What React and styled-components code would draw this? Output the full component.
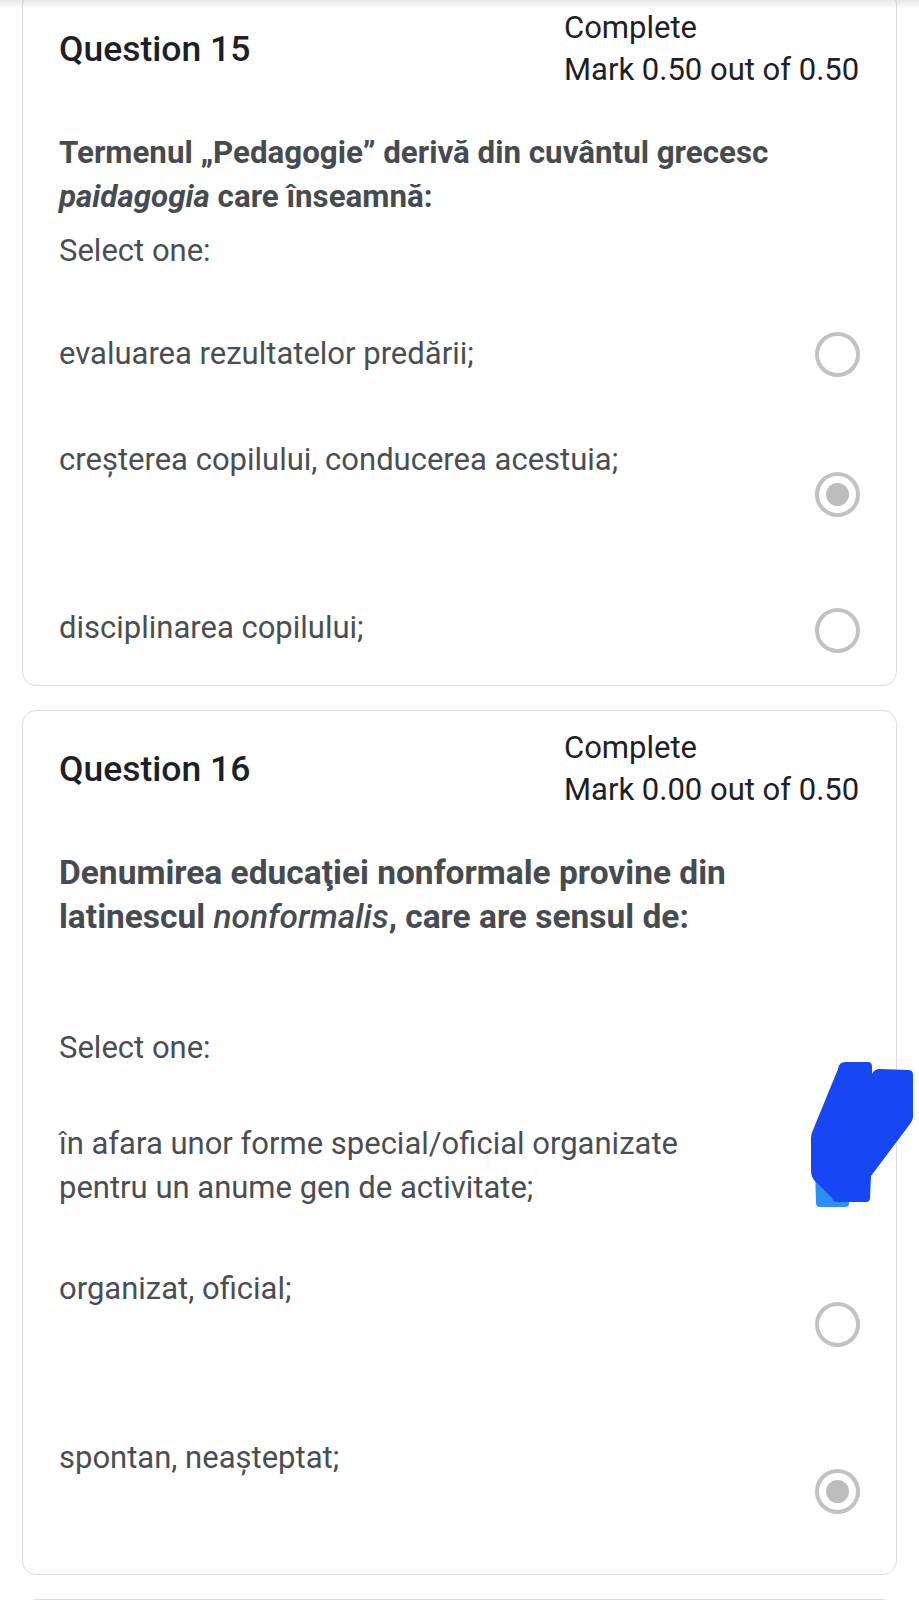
import React from 'react'
import styled, { createGlobalStyle } from 'styled-components'

const GlobalStyle = createGlobalStyle`
    body {
        margin: 0;
        background: #ffffff;
        font-family: Roboto, "Liberation Sans", sans-serif;
        overflow: hidden;
    }
`;

const Page = styled.div`
    position: relative;
    padding: 0 22px;
    display: flex;
    flex-direction: column;
    gap: 24px;
`;

const TopShade = styled.div`
    position: fixed;
    top: 0;
    left: 0;
    right: 0;
    height: 9px;
    background: linear-gradient(to bottom, rgba(0,0,0,0.09), rgba(0,0,0,0));
    z-index: 5;
`;

const Card = styled.div`
    position: relative;
    border: 1.5px solid #dedede;
    border-radius: 14px;
    padding: 16px 36px 0 36px;
    margin-top: ${props => props.$offset || 0}px;
    min-height: ${props => props.$stub ? '120px' : 'auto'};
`;

const Header = styled.div`
    display: flex;
    justify-content: space-between;
    align-items: center;
    margin-bottom: 40px;
`;

const Title = styled.h3`
    margin: 0;
    font-size: 35.5px;
    font-weight: 500;
    color: #1d2125;
`;

const Meta = styled.div`
    font-size: 31px;
    line-height: 42px;
    color: #1d2125;
    width: 296px;
`;

const QText = styled.div`
    font-size: ${props => props.$size}px;
    line-height: 44px;
    font-weight: 700;
    color: #464b50;
    max-width: 740px;
    margin-bottom: ${props => props.$after}px;

    i {
        font-weight: ${props => props.$emWeight};
    }
`;

const Prompt = styled.div`
    font-size: 31px;
    line-height: 44px;
    color: #4a4e53;
`;

const AnswerList = styled.div`
    margin-top: ${props => props.$top}px;
    display: flex;
    flex-direction: column;
`;

const AnswerRow = styled.div`
    display: flex;
    justify-content: space-between;
    align-items: flex-start;
    gap: 16px;
    min-height: ${props => props.$h}px;
`;

const AnswerText = styled.div`
    font-size: 31px;
    line-height: 44px;
    color: #4a4e53;
    max-width: 680px;
`;

const Radio = styled.div`
    flex: 0 0 auto;
    box-sizing: border-box;
    width: 45px;
    height: 45px;
    margin-top: ${props => props.$mt}px;
    border: 4px solid #c2c2c2;
    border-radius: 50%;
    display: flex;
    align-items: center;
    justify-content: center;

    &::after {
        content: '';
        display: ${props => props.$checked ? 'block' : 'none'};
        width: 23px;
        height: 23px;
        border-radius: 50%;
        background: #bdbdbd;
    }
`;

const Scribble = styled.svg`
    position: absolute;
    left: 785px;
    top: 347px;
    z-index: 3;
`;

const questions = [
    {
        number: 15,
        mark: '0.50',
        size: 31.3,
        emWeight: 700,
        after: 10,
        listTop: 59,
        text: (
            <>Termenul „Pedagogie” derivă din cuvântul grecesc <i>paidagogia</i> care înseamnă:</>
        ),
        answers: [
            { label: 'evaluarea rezultatelor predării;', h: 106, mt: 0 },
            { label: 'creșterea copilului, conducerea acestuia;', h: 168, mt: 34, checked: true },
            { label: 'disciplinarea copilului;', h: 79, mt: 2 },
        ],
    },
    {
        number: 16,
        mark: '0.00',
        size: 33.5,
        emWeight: 500,
        after: 87,
        listTop: 52,
        redacted: true,
        text: (
            <>Denumirea educaţiei nonformale provine din latinescul <i>nonformalis</i>, care are sensul de:</>
        ),
        answers: [
            { label: 'în afara unor forme special/oficial organizate pentru un anume gen de activitate;', h: 145, mt: 12 },
            { label: 'organizat, oficial;', h: 169, mt: 35 },
            { label: 'spontan, neașteptat;', h: 138, mt: 33, checked: true },
        ],
    },
];

const Redaction = () => (
    <Scribble width="110" height="150" viewBox="0 0 110 150">
        <path
            d="M7 110 L41 110 L41 146 Q41 149 37 149 L12 149 Q8 149 8 145 Z"
            fill="#2b8ef2"
        />
        <path
            d="M30 11 Q31 4 37 4 L60 4 Q64 4 64 9 L64 16 Q66 11 72 11 L100 12 Q105 12 105 17 L105 59
               Q105 62 102 66 L63 118 L62 140 Q62 144 58 144 L30 144 Q25 144 24 140 L8 124 Q3 120 3 112
               L3 80 Q3 76 5 72 Z"
            fill="#1746f4"
        />
    </Scribble>
);

const QuestionCard = ({ q, offset }) => (
    <Card $offset={offset}>
        <Header>
            <Title>Question {q.number}</Title>
            <Meta>
                Complete<br />
                Mark {q.mark} out of 0.50
            </Meta>
        </Header>
        <QText $after={q.after} $size={q.size} $emWeight={q.emWeight}>{q.text}</QText>
        <Prompt>Select one:</Prompt>
        <AnswerList $top={q.listTop}>
            {q.answers.map((a) => (
                <AnswerRow key={a.label} $h={a.h}>
                    <AnswerText>{a.label}</AnswerText>
                    <Radio $mt={a.mt} $checked={a.checked} />
                </AnswerRow>
            ))}
        </AnswerList>
        {q.redacted && <Redaction />}
    </Card>
);

export default function App() {
    return (
        <>
            <GlobalStyle />
            <TopShade />
            <Page>
                <QuestionCard q={questions[0]} offset={-10} />
                <QuestionCard q={questions[1]} />
                <Card $stub />
            </Page>
        </>
    );
}
